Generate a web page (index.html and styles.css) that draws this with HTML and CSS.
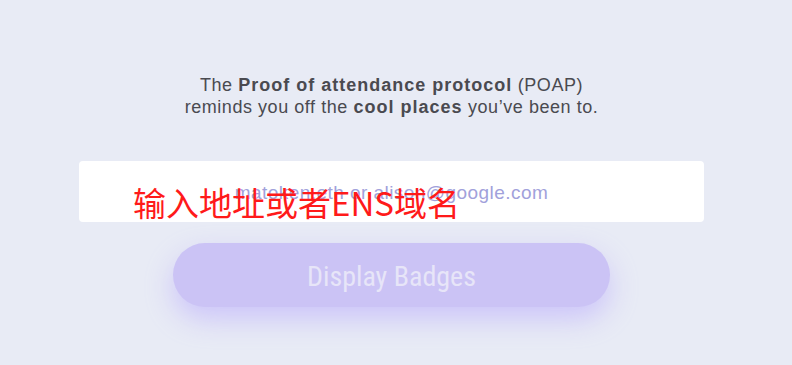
FILE: index.html
```html
<!DOCTYPE html>
<html lang="en">
<head>
  <meta charset="UTF-8">
  <meta name="viewport" content="width=device-width, initial-scale=1.0">
  <title>POAP - Display Badges</title>
  <link rel="stylesheet" href="styles.css">
</head>
<body>
  <main class="hero">
    <p class="intro">
      The <b>Proof of attendance protocol</b> (POAP)<br>
      reminds you off the <b>cool places</b> you’ve been to.
    </p>
    <form class="search" onsubmit="return false">
      <div class="field">
        <input type="text" id="address" placeholder="matoken.eth or alison@google.com">
        <span class="note">输入地址或者ENS域名</span>
      </div>
      <button type="submit" class="btn" disabled>Display Badges</button>
    </form>
  </main>
</body>
</html>
```

FILE: styles.css
```css
html, body {
  margin: 0;
  height: 100%;
}
body {
  font-family: "Liberation Sans", Arial, sans-serif;
  background-color: #e8ebf5;
  color: #4a4a50;
}
.hero {
  padding-top: 74px;
  padding-right: 9px;
  text-align: center;
}
.intro {
  margin: 0;
  font-size: 18px;
  line-height: 22px;
  letter-spacing: 0.55px;
}
.intro b {
  font-weight: 700;
  letter-spacing: 1px;
}
.search {
  display: flex;
  flex-direction: column;
  align-items: center;
  margin-top: 43px;
}
.field {
  position: relative;
  width: 625px;
}
.field input {
  box-sizing: border-box;
  width: 100%;
  height: 61px;
  border: none;
  border-radius: 4px;
  background: #fff;
  font-family: "Liberation Sans", Arial, sans-serif;
  font-size: 19px;
  letter-spacing: 0.45px;
  text-align: center;
  padding: 0 20px;
  padding-top: 2px;
  outline: none;
}
.field input::placeholder {
  color: #a1a1db;
}
.note {
  position: absolute;
  left: 54px;
  top: 19px;
  font-family: "Noto Sans CJK SC", sans-serif;
  font-size: 33px;
  line-height: 44px;
  color: #ff1a1a;
  pointer-events: none;
}
.btn {
  margin-top: 21px;
  width: 437px;
  height: 64px;
  border: none;
  border-radius: 32px;
  background: #cbc3f5;
  color: #e7e5f8;
  font-family: "Roboto Condensed", Roboto, sans-serif;
  font-size: 28px;
  padding-top: 3px;
  box-shadow: 0 12px 28px rgba(170, 150, 255, 0.45);
  cursor: pointer;
}
```
